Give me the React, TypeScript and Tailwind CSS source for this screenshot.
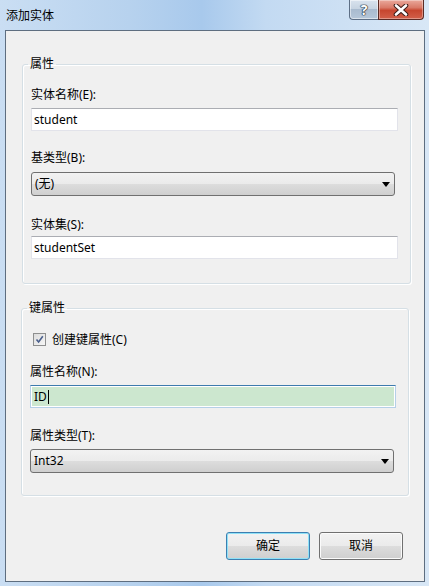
import React from 'react';

const font = { fontFamily: '"Noto Sans", "Noto Sans CJK SC", sans-serif' };

const Label: React.FC<{ text: string; className?: string }> = ({ text, className }) => (
  <div className={`h-[14px] leading-[14px] text-[12px] text-black ${className ?? ''}`}>{text}</div>
);

const TextBox: React.FC<{ value: string; className?: string }> = ({ value, className }) => (
  <div
    className={`flex items-center h-[23px] bg-white border border-[#e2e3ea] border-t-[#abadb3] pl-[2px] text-[12px] leading-[14px] text-black ${className ?? ''}`}
  >
    {value}
  </div>
);

const ComboBox: React.FC<{ value: string; className?: string }> = ({ value, className }) => (
  <div
    className={`flex items-center h-[24px] rounded-[3px] border border-[#707070] bg-[linear-gradient(180deg,#f2f2f2_0%,#ebebeb_49%,#dddddd_50%,#cfcfcf_100%)] pl-[3px] pr-[4px] text-[12px] leading-[14px] text-black ${className ?? ''}`}
  >
    <span className="flex-1">{value}</span>
    <svg width="8" height="5" viewBox="0 0 8 5">
      <polygon points="0,0 8,0 4,5" fill="#000" />
    </svg>
  </div>
);

const Button: React.FC<{ text: string; focused?: boolean }> = ({ text, focused }) => (
  <div
    className={`flex items-center justify-center w-[84px] h-[28px] rounded-[3px] border text-[12px] text-black bg-[linear-gradient(180deg,#f2f2f2_0%,#ebebeb_49%,#dddddd_50%,#cfcfcf_100%)] ${
      focused ? 'border-[#3c7fb1] shadow-[inset_0_0_0_1px_#8fe1f7]' : 'border-[#707070] shadow-[inset_0_0_0_1px_#fbfbfb]'
    }`}
  >
    {text}
  </div>
);

export default function App() {
  return (
    <div
      style={font}
      className="w-[429px] h-[586px] flex flex-col bg-[linear-gradient(90deg,#cadef3_0%,#b7d2ee_30%,#a8c9ec_47%,#c3daf2_62%,#d8e7f6_100%)]"
    >
      {/* title bar */}
      <div className="h-[30px] flex items-start">
        <div className="pl-[6px] pt-[8px] leading-[16px] text-[12px] text-black">添加实体</div>
        <div className="ml-auto mr-[5px] flex">
          <div className="w-[29px] h-[20px] flex items-center justify-center rounded-bl-[4px] border border-t-0 border-r-0 border-[#5d6f86] bg-[linear-gradient(180deg,#d9e3ee_0%,#c7d4e2_45%,#a9bbcf_50%,#b6c7d9_100%)] shadow-[inset_0_0_0_1px_rgba(255,255,255,0.5)]">
            <span
              className="text-[14px] font-bold leading-[14px] text-white"
              style={{ textShadow: '0 0 1px #1e2836, 0 0 1px #1e2836, 0 0 1px #1e2836, 0 0 1px #1e2836' }}
            >
              ?
            </span>
          </div>
          <div className="w-[46px] h-[20px] flex items-center justify-center rounded-br-[4px] border border-t-0 border-[#5b2b25] bg-[linear-gradient(180deg,#eaa99c_0%,#d97a68_40%,#c7462f_55%,#d2604a_100%)] shadow-[inset_0_0_0_1px_rgba(255,255,255,0.35)]">
            <svg width="16" height="12" viewBox="0 0 16 12">
              <path d="M3 1.5 L13 10.5 M13 1.5 L3 10.5" stroke="#3a1a16" strokeWidth="4.6" strokeLinecap="round" />
              <path d="M3 1.5 L13 10.5 M13 1.5 L3 10.5" stroke="#ffffff" strokeWidth="2.6" strokeLinecap="round" />
            </svg>
          </div>
        </div>
      </div>

      {/* client area */}
      <div className="ml-[5px] mr-[4px] mb-[4px] flex-1 flex flex-col border border-[#5e6e80] bg-[#f0f0f0]">
        <fieldset className="mt-[26px] ml-[16px] w-[389px] border border-[#d5dfe5] rounded-[3px] shadow-[inset_1px_1px_0_#ffffff,1px_1px_0_#ffffff] px-0 pb-[24px]">
          <legend className="ml-[5px] px-[2px] h-[14px] leading-[14px] text-[12px] text-black">属性</legend>
          <div className="pl-[8px] flex flex-col">
            <Label text="实体名称(E):" className="mt-[17px]" />
            <TextBox value="student" className="mt-[6px] w-[367px]" />
            <Label text="基类型(B):" className="mt-[20px]" />
            <ComboBox value="(无)" className="mt-[7px] w-[364px]" />
            <Label text="实体集(S):" className="mt-[22px]" />
            <TextBox value="studentSet" className="mt-[4px] w-[367px]" />
          </div>
        </fieldset>

        <fieldset className="mt-[17px] ml-[15px] w-[388px] border border-[#d5dfe5] rounded-[3px] shadow-[inset_1px_1px_0_#ffffff,1px_1px_0_#ffffff] px-0 pb-[22px]">
          <legend className="ml-[5px] px-[2px] h-[14px] leading-[14px] text-[12px] text-black">键属性</legend>
          <div className="pl-[8px] flex flex-col">
            <div className="mt-[18px] h-[13px] flex items-center pl-[3px]">
              <div className="w-[13px] h-[13px] border border-[#8e8f8f] bg-[linear-gradient(135deg,#dcdcdc_0%,#f6f6f6_100%)] flex items-center justify-center">
                <svg width="9" height="9" viewBox="0 0 9 9">
                  <path d="M1.5 4.5 L3.6 7 L7.8 1.2" stroke="#4a5f8c" strokeWidth="1.6" fill="none" />
                </svg>
              </div>
              <span className="ml-[6px] text-[12px] leading-[14px] text-black">创建键属性(C)</span>
            </div>
            <Label text="属性名称(N):" className="mt-[19px]" />
            <div className="mt-[6px] w-[366px] h-[23px] border border-[#b5cfe7] border-t-[#3d7bad] bg-white p-[1px]">
              <div className="h-full flex items-center bg-[#cce7cf] pl-[2px] text-[12px] leading-[14px] text-black">
                ID
                <span className="ml-[1px] w-[1px] h-[14px] bg-black" />
              </div>
            </div>
            <Label text="属性类型(T):" className="mt-[21px]" />
            <ComboBox value="Int32" className="mt-[6px] w-[364px]" />
          </div>
        </fieldset>

        <div className="mt-auto mb-[21px] mr-[21px] flex justify-end gap-[9px]">
          <Button text="确定" focused />
          <Button text="取消" />
        </div>
      </div>
    </div>
  );
}
